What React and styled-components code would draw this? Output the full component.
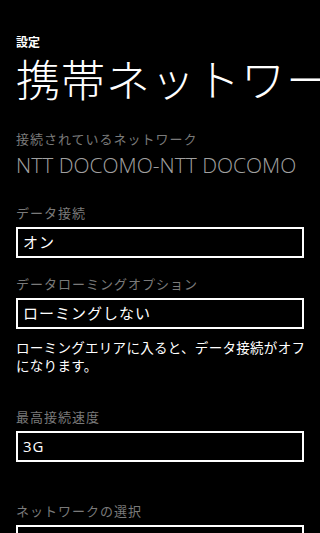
import React from 'react';
import styled, { createGlobalStyle } from 'styled-components';

const GlobalStyle = createGlobalStyle`
    html, body {
        margin: 0;
        padding: 0;
        background: #000;
    }
    body {
        font-family: "Open Sans", "Noto Sans CJK JP", sans-serif;
        color: #fff;
        overflow: hidden;
    }
`;

// space above each field, measured from the previous block
const fields = [
    { label: 'データ接続', value: 'オン', top: 25 },
    { label: 'データローミングオプション', value: 'ローミングしない', top: 17, note: 'ローミングエリアに入ると、データ接続がオフになります。' },
    { label: '最高接続速度', value: '3G', top: 34 },
    { label: 'ネットワークの選択', value: '', top: 40 },
];

const App = () => {
    return (
        <Page>
            <GlobalStyle />
            <AppName>設定</AppName>
            <Title>携帯ネットワーク</Title>
            <Info>
                <Label>接続されているネットワーク</Label>
                <Network>NTT DOCOMO-NTT DOCOMO</Network>
            </Info>
            {fields.map(field => (
                <Field key={field.label} $top={field.top}>
                    <Label>{field.label}</Label>
                    <Picker>{field.value}</Picker>
                    {field.note && <Note>{field.note}</Note>}
                </Field>
            ))}
        </Page>
    );
};

const Page = styled.div`
    width: 320px;
    height: 533px;
    overflow: hidden;
    padding: 34px 0 0 16px;
    box-sizing: border-box;
`;

const AppName = styled.div`
    font-family: "Noto Sans CJK JP", sans-serif;
    font-size: 12px;
    font-weight: 700;
    line-height: 16px;
`;

const Title = styled.h1`
    margin: 4px 0 0;
    font-family: "Noto Sans CJK JP", sans-serif;
    font-size: 44px;
    font-weight: 300;
    line-height: 48px;
    white-space: nowrap;
    letter-spacing: 1px;
`;

const Info = styled.div`
    margin-top: 28px;
`;

const Label = styled.div`
    font-family: "Noto Sans CJK JP", sans-serif;
    font-size: 13px;
    line-height: 18px;
    color: #7a7a7a;
    letter-spacing: 1px;
`;

const Network = styled.div`
    font-family: "Open Sans", "Noto Sans CJK JP", sans-serif;
    font-size: 21px;
    font-weight: 300;
    line-height: 28px;
    color: #a0a0a0;
    margin-top: 3px;
`;

const Field = styled.div`
    margin-top: ${props => props.$top}px;
`;

const Picker = styled.div`
    margin-top: 5px;
    width: 288px;
    height: 31px;
    box-sizing: border-box;
    border: 2px solid #fff;
    padding: 0 5px;
    font-family: "Open Sans", "Noto Sans CJK JP", sans-serif;
    font-size: 15px;
    line-height: 27px;
    letter-spacing: 1px;
`;

const Note = styled.div`
    margin-top: 9px;
    width: 290px;
    font-family: "Noto Sans CJK JP", sans-serif;
    font-size: 13.5px;
    line-height: 18px;
    letter-spacing: 0.3px;
`;

export default App;
